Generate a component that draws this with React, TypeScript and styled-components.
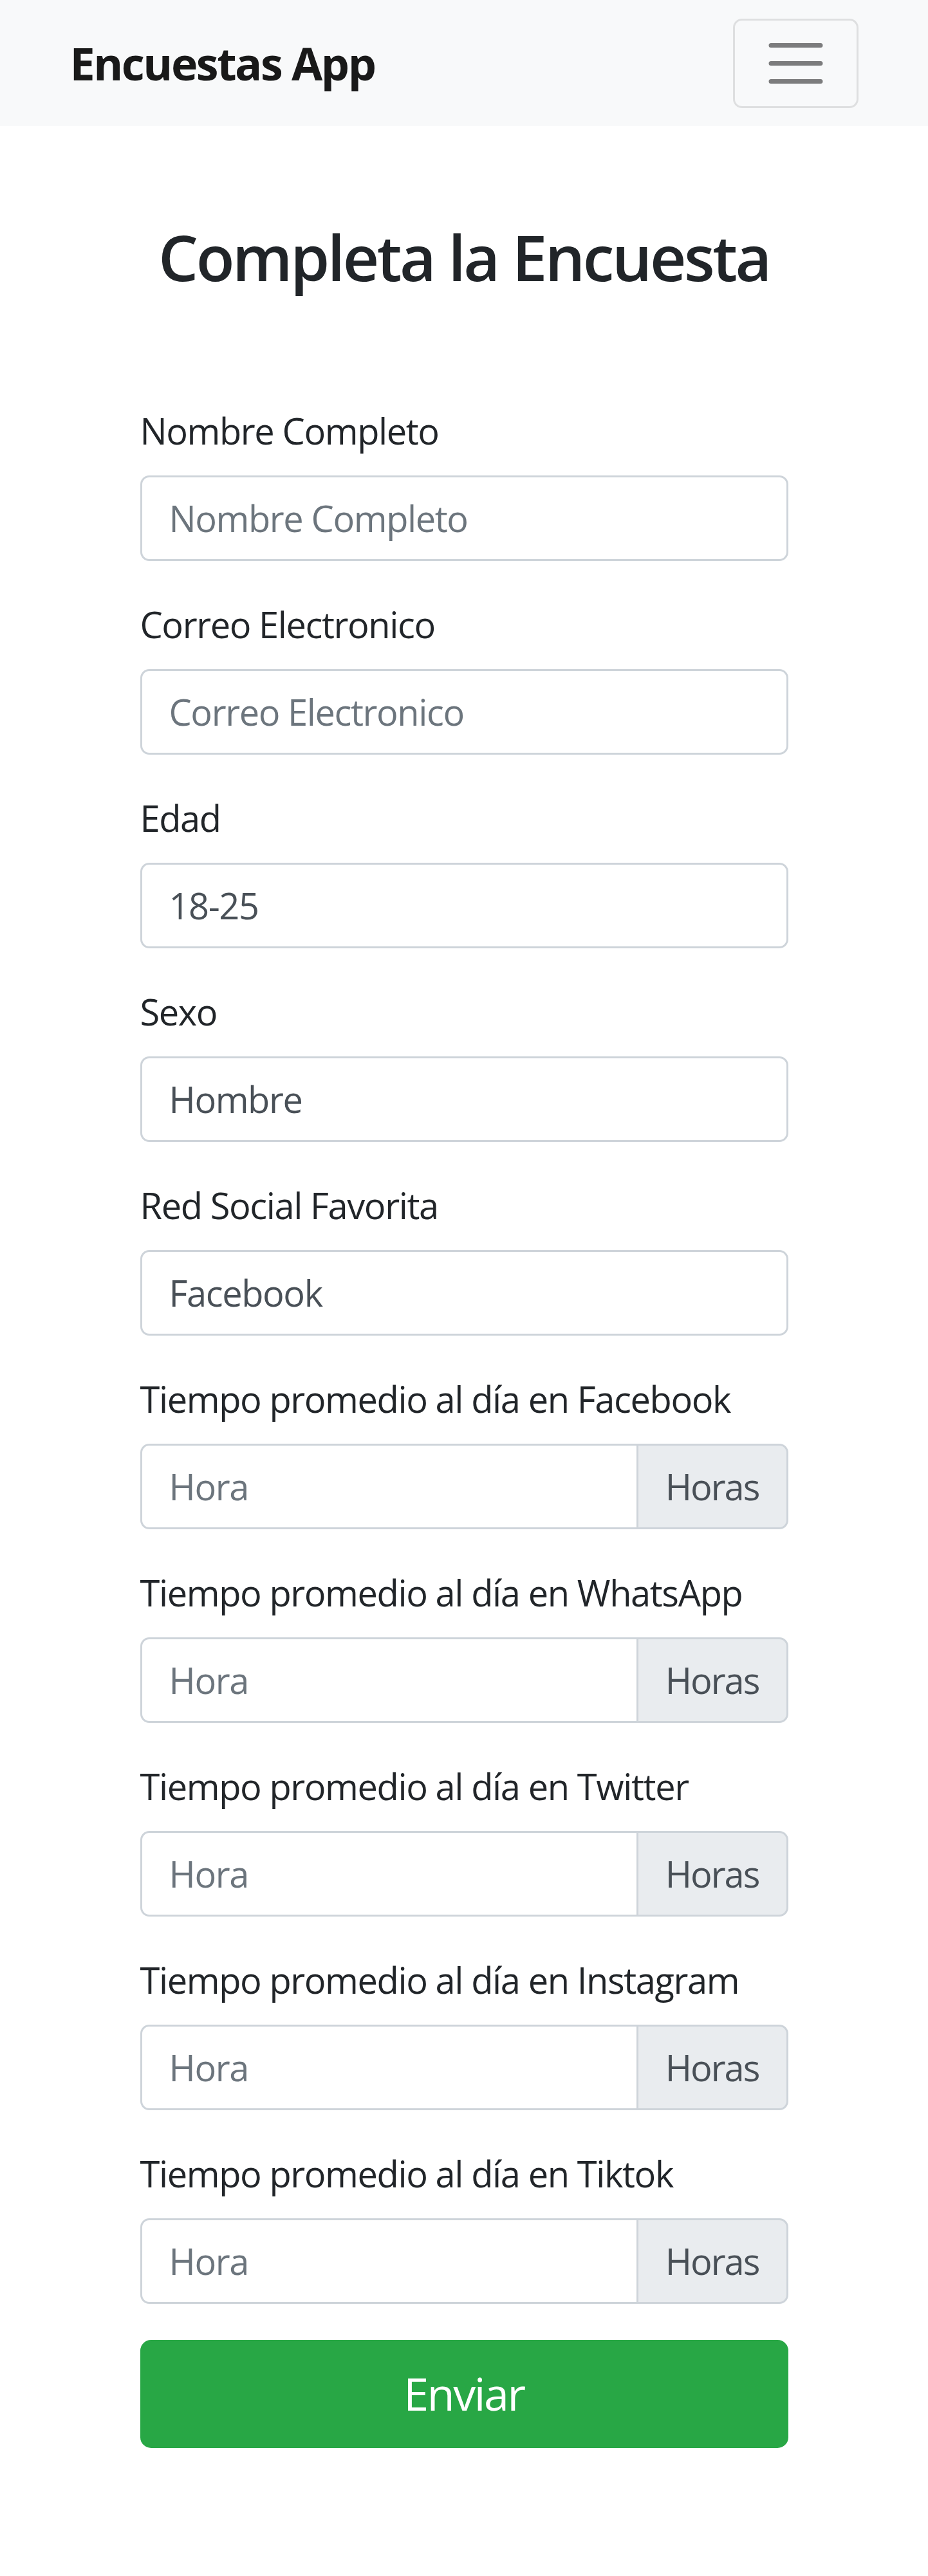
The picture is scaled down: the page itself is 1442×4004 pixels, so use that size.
import React from "react";
import styled, { createGlobalStyle } from "styled-components";

const GlobalStyle = createGlobalStyle`
  html, body {
    margin: 0;
    padding: 0;
    background: #ffffff;
  }
  body {
    font-family: "Open Sans", "Noto Sans", sans-serif;
    color: #212529;
  }
  *, *::before, *::after { box-sizing: border-box; }
`;

const Navbar = styled.nav`
  height: 196px;
  background: #f8f9fa;
  display: flex;
  align-items: center;
  justify-content: space-between;
  padding: 0 108.5px;
`;

const Brand = styled.a`
  font-size: 70px;
  line-height: 105px;
  font-weight: 700;
  letter-spacing: -0.035em;
  color: rgba(0, 0, 0, 0.9);
  text-decoration: none;
`;

const Toggler = styled.button`
  width: 195px;
  height: 139px;
  padding: 0;
  display: flex;
  align-items: center;
  justify-content: center;
  background: transparent;
  border: 3.5px solid rgba(0, 0, 0, 0.1);
  border-radius: 14px;
`;

const Main = styled.main`
  width: 1007px;
  margin: 0 auto;
  padding-bottom: 200px;
`;

const Title = styled.h3`
  margin: 145px 0 168px;
  font-size: 98px;
  line-height: 117.6px;
  font-weight: 600;
  letter-spacing: -0.035em;
  text-align: center;
  color: #212529;
`;

const Form = styled.form`
  display: flex;
  flex-direction: column;
`;

const Group = styled.div`
  margin-bottom: 56px;
`;

const Label = styled.label`
  display: block;
  font-size: 56px;
  line-height: 84px;
  letter-spacing: -0.025em;
  margin-bottom: 28px;
  color: #212529;
`;

const fieldCss = `
  display: block;
  width: 100%;
  height: 133px;
  padding: 21px 42px;
  font-family: "Open Sans", "Noto Sans", sans-serif;
  font-size: 56px;
  line-height: 84px;
  letter-spacing: -0.025em;
  color: #495057;
  background: #ffffff;
  border: 3.5px solid #ced4da;
  outline: none;
`;

const TextInput = styled.input<{ $joined?: boolean }>`
  ${fieldCss}
  flex: 1 1 auto;
  min-width: 0;
  border-radius: ${(p) => (p.$joined ? "14px 0 0 14px" : "14px")};
  &::placeholder {
    color: #6c757d;
    opacity: 1;
  }
`;

const Select = styled.select`
  ${fieldCss}
  border-radius: 14px;
  appearance: none;
  -webkit-appearance: none;
`;

const InputGroup = styled.div`
  display: flex;
  align-items: stretch;
  width: 100%;
`;

const Append = styled.span`
  display: flex;
  align-items: center;
  margin-left: -3.5px;
  padding: 21px 42px;
  font-size: 56px;
  line-height: 84px;
  letter-spacing: -0.035em;
  color: #495057;
  background: #e9ecef;
  border: 3.5px solid #ced4da;
  border-radius: 0 14px 14px 0;
  white-space: nowrap;
`;

const Submit = styled.button`
  width: 100%;
  height: 168px;
  padding: 28px 56px;
  font-family: "Open Sans", "Noto Sans", sans-serif;
  font-size: 70px;
  line-height: 105px;
  letter-spacing: -0.035em;
  color: #ffffff;
  background: #28a745;
  border: 3.5px solid #28a745;
  border-radius: 16.8px;
`;

const MenuIcon = () => (
  <svg width="105" height="105" viewBox="0 0 30 30" aria-hidden="true">
    <path
      d="M4 7h22M4 15h22M4 23h22"
      stroke="rgba(0,0,0,0.5)"
      strokeWidth="2"
      strokeLinecap="round"
      strokeMiterlimit="10"
      fill="none"
    />
  </svg>
);

const redes = ["Facebook", "WhatsApp", "Twitter", "Instagram", "Tiktok"];

export default function App() {
  return (
    <>
      <GlobalStyle />
      <Navbar>
        <Brand href="#">Encuestas App</Brand>
        <Toggler type="button" aria-label="Toggle navigation">
          <MenuIcon />
        </Toggler>
      </Navbar>
      <Main>
        <Title>Completa la Encuesta</Title>
        <Form onSubmit={(e) => e.preventDefault()}>
          <Group>
            <Label htmlFor="nombre">Nombre Completo</Label>
            <TextInput id="nombre" type="text" placeholder="Nombre Completo" />
          </Group>
          <Group>
            <Label htmlFor="correo">Correo Electronico</Label>
            <TextInput id="correo" type="email" placeholder="Correo Electronico" />
          </Group>
          <Group>
            <Label htmlFor="edad">Edad</Label>
            <Select id="edad" defaultValue="18-25">
              <option>18-25</option>
              <option>26-33</option>
              <option>34-40</option>
              <option>40+</option>
            </Select>
          </Group>
          <Group>
            <Label htmlFor="sexo">Sexo</Label>
            <Select id="sexo" defaultValue="Hombre">
              <option>Hombre</option>
              <option>Mujer</option>
            </Select>
          </Group>
          <Group>
            <Label htmlFor="red">Red Social Favorita</Label>
            <Select id="red" defaultValue="Facebook">
              {redes.map((r) => (
                <option key={r}>{r}</option>
              ))}
            </Select>
          </Group>
          {redes.map((r) => (
            <Group key={r}>
              <Label htmlFor={`t-${r}`}>Tiempo promedio al día en {r}</Label>
              <InputGroup>
                <TextInput $joined id={`t-${r}`} type="number" placeholder="Hora" />
                <Append>Horas</Append>
              </InputGroup>
            </Group>
          ))}
          <Submit type="submit">Enviar</Submit>
        </Form>
      </Main>
    </>
  );
}
